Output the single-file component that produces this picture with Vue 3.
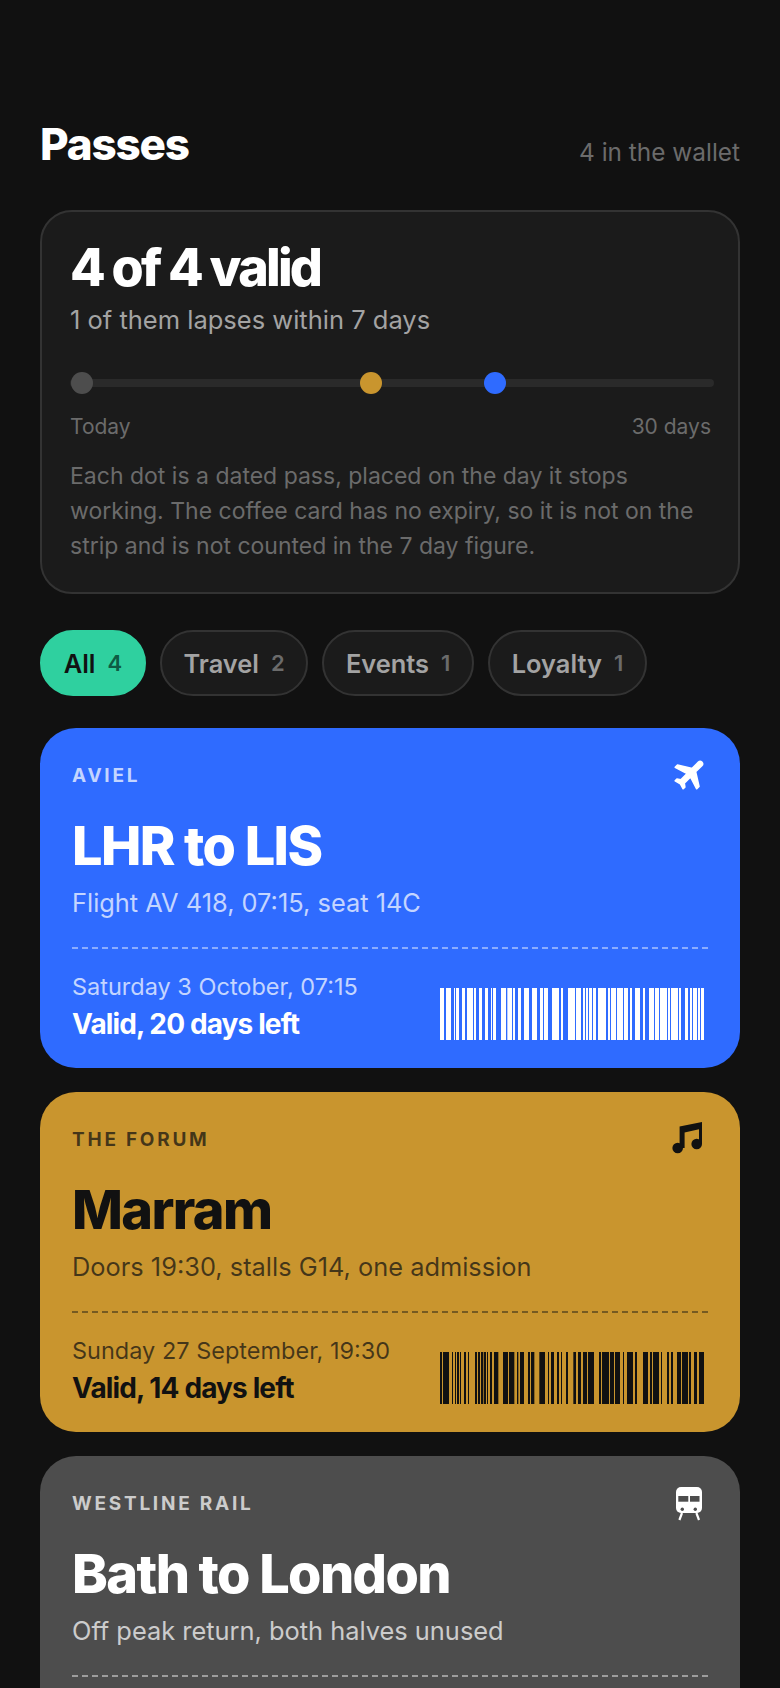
<template>
  <div class="wallet">
    <header class="top">
      <h1>Passes</h1>
      <span class="top-count">4 in the wallet</span>
    </header>

    <section class="summary">
      <h2>4 of 4 valid</h2>
      <p class="summary-sub">1 of them lapses within 7 days</p>
      <div class="strip">
        <span v-for="d in dots" :key="d.left" class="dot" :class="d.cls" :style="{ left: d.left + 'px' }"></span>
      </div>
      <div class="strip-ends">
        <span>Today</span>
        <span>30 days</span>
      </div>
      <p class="summary-note">
        Each dot is a dated pass, placed on the day it stops working. The coffee card has no expiry, so it is not on
        the strip and is not counted in the 7 day figure.
      </p>
    </section>

    <nav class="filters">
      <button v-for="(f, i) in filters" :key="f.name" class="chip" :class="{ active: i === 0 }">
        {{ f.name }}<span class="chip-num">{{ f.count }}</span>
      </button>
    </nav>

    <article v-for="p in passes" :key="p.title" class="pass" :class="p.cls">
      <div class="pass-head">
        <span class="issuer">{{ p.issuer }}</span>
        <svg v-if="p.icon === 'plane'" class="icon" viewBox="0 0 36 36" aria-hidden="true">
          <g transform="translate(18.5 15.5) rotate(45) scale(1.6) translate(-11.5 -12)">
            <path
              d="M21 16v-2l-8-5V3.5c0-.83-.67-1.5-1.5-1.5S10 2.67 10 3.5V9l-8 5v2l8-2.5V19l-2 1.5V22l3.5-1 3.5 1v-1.5L13 19v-5.5l8 2.5z"
              fill="currentColor" stroke="currentColor" stroke-width="1" stroke-linejoin="round"
            />
          </g>
        </svg>
        <svg v-else-if="p.icon === 'music'" class="icon" viewBox="0 0 36 36" aria-hidden="true">
          <circle cx="5.7" cy="26" r="5.3" fill="currentColor" />
          <circle cx="24.7" cy="22" r="5.3" fill="currentColor" />
          <path d="M7.6 26V4.6L30 0v22h-3V7.3l-14.4 3.2V26z" fill="currentColor" />
        </svg>
        <svg v-else class="icon" viewBox="0 0 36 36" aria-hidden="true">
          <rect x="4" y="1" width="26" height="26" rx="5" fill="currentColor" />
          <rect x="6.3" y="10" width="10" height="5.7" fill="#4d4d4d" />
          <rect x="18" y="10" width="9.5" height="5.7" fill="#4d4d4d" />
          <circle cx="10.3" cy="23.3" r="1.7" fill="#4d4d4d" />
          <circle cx="23.3" cy="23.3" r="1.7" fill="#4d4d4d" />
          <path d="M10 27l-2.6 7M24.4 27l2.6 7" stroke="currentColor" stroke-width="2.2" fill="none" />
        </svg>
      </div>
      <h3>{{ p.title }}</h3>
      <p class="pass-sub">{{ p.sub }}</p>
      <div class="rule"></div>
      <div v-if="p.when" class="pass-foot">
        <div>
          <p class="when">{{ p.when }}</p>
          <p class="status">{{ p.status }}</p>
        </div>
        <svg class="barcode" viewBox="0 0 264 52" preserveAspectRatio="none" aria-hidden="true">
          <rect v-for="b in bars(p.code)" :key="b[0]" :x="b[0]" y="0" :width="b[1]" height="52" fill="currentColor" />
        </svg>
      </div>
    </article>
  </div>
</template>

<script setup>
const dots = [
  { left: 1, cls: 'grey' },
  { left: 290, cls: 'amber' },
  { left: 414, cls: 'blue' }
];

const filters = [
  { name: 'All', count: 4 },
  { name: 'Travel', count: 2 },
  { name: 'Events', count: 1 },
  { name: 'Loyalty', count: 1 }
];

// bar start,end pairs read off the picture, in 3x pixels from x=420
const blueCode = [
  60, 72, 78, 93, 102, 105, 108, 117, 126, 135, 141, 159, 162, 168, 177, 186, 195, 204, 213, 216, 219, 228, 243, 258,
  262, 276, 279, 285, 294, 303, 312, 327, 336, 351, 360, 369, 372, 384, 396, 417, 423, 429, 444, 465, 468, 483, 489,
  495, 498, 504, 507, 516, 519, 528, 534, 558, 564, 570, 573, 588, 591, 609, 612, 624, 630, 636, 645, 660, 669, 675,
  687, 702, 705, 717, 720, 741, 744, 750, 753, 774, 777, 783, 795, 804, 810, 816, 819, 831, 834, 840, 843, 852
];
const amberCode = [
  60, 66, 69, 87, 96, 99, 105, 108, 111, 117, 120, 123, 132, 138, 144, 147, 165, 171, 174, 180, 183, 190, 192, 198,
  201, 204, 210, 216, 222, 235, 249, 264, 267, 283, 291, 295, 300, 312, 324, 330, 333, 343, 358, 375, 384, 387, 393,
  402, 411, 417, 423, 426, 438, 444, 460, 468, 474, 483, 489, 501, 504, 522, 537, 543, 546, 567, 570, 582, 585, 600,
  609, 612, 621, 639, 645, 651, 669, 684, 690, 696, 699, 717, 723, 726, 741, 747, 753, 759, 771, 783, 786, 804, 807,
  813, 822, 831, 837, 852
];

const bars = (code) => {
  const out = [];
  for (let i = 0; i < code.length; i += 2) {
    out.push([(code[i] - 60) / 3, (code[i + 1] - code[i]) / 3]);
  }
  return out;
};

const passes = [
  {
    cls: 'blue',
    icon: 'plane',
    issuer: 'AVIEL',
    title: 'LHR to LIS',
    sub: 'Flight AV 418, 07:15, seat 14C',
    when: 'Saturday 3 October, 07:15',
    status: 'Valid, 20 days left',
    code: blueCode
  },
  {
    cls: 'amber',
    icon: 'music',
    issuer: 'THE FORUM',
    title: 'Marram',
    sub: 'Doors 19:30, stalls G14, one admission',
    when: 'Sunday 27 September, 19:30',
    status: 'Valid, 14 days left',
    code: amberCode
  },
  {
    cls: 'grey',
    icon: 'train',
    issuer: 'WESTLINE RAIL',
    title: 'Bath to London',
    sub: 'Off peak return, both halves unused'
  }
];
</script>

<style>
html,
body {
  background: #111111;
}
</style>

<style scoped>
.wallet {
  box-sizing: border-box;
  height: 1688px;
  overflow: hidden;
  padding: 114px 40px 0;
  background: #111111;
  color: #ffffff;
  font-family: Inter, "Liberation Sans", sans-serif;
}
.top {
  display: flex;
  justify-content: space-between;
  align-items: flex-end;
  height: 60px;
  margin-bottom: 36px;
}
.top h1 {
  margin: 0;
  font-size: 44px;
  line-height: 60px;
  font-weight: 800;
  letter-spacing: -1.2px;
}
.top-count {
  font-size: 24.4px;
  line-height: 30px;
  margin-bottom: 7px;
  color: #6b6b6b;
}
.summary {
  box-sizing: border-box;
  height: 384px;
  padding: 26px 24px 26px 28px;
  background: #1b1b1b;
  border: 2px solid #333333;
  border-radius: 32px;
}
.summary h2 {
  margin: 0;
  font-size: 52px;
  line-height: 60px;
  font-weight: 800;
  letter-spacing: -2.8px;
}
.summary-sub {
  margin: 6px 0 0;
  font-size: 25.5px;
  line-height: 32px;
  color: #a3a3a3;
}
.strip {
  position: relative;
  height: 8px;
  margin-top: 43px;
  background: #2a2a2a;
  border-radius: 4px;
}
.dot {
  position: absolute;
  top: -7px;
  width: 22px;
  height: 22px;
  border-radius: 50%;
}
.dot.grey { background: #4d4d4d; }
.dot.amber { background: #c9952e; }
.dot.blue { background: #2f6bff; }
.strip-ends {
  display: flex;
  justify-content: space-between;
  margin-top: 26px;
  padding-right: 3px;
  font-size: 21px;
  line-height: 28px;
  color: #6b6b6b;
}
.summary-note {
  margin: 18px 0 0;
  font-size: 23px;
  line-height: 35px;
  color: #6b6b6b;
}
.filters {
  display: flex;
  gap: 14px;
  margin-top: 36px;
}
.chip {
  display: flex;
  align-items: center;
  gap: 12px;
  box-sizing: border-box;
  height: 66px;
  padding: 0 21.7px;
  background: #1b1b1b;
  border: 2px solid #333333;
  border-radius: 33px;
  color: #a3a3a3;
  font-family: inherit;
  font-size: 25.4px;
  font-weight: 600;
}
.chip-num {
  font-size: 22px;
  color: #6b6b6b;
}
.chip.active {
  background: #2fd09f;
  border-color: #2fd09f;
  color: #111111;
}
.chip.active .chip-num {
  color: #0e5b44;
}
.pass {
  box-sizing: border-box;
  min-height: 340px;
  margin-top: 24px;
  padding: 30px 32px 26px;
  border-radius: 36px;
}
.filters + .pass {
  margin-top: 32px;
}
.pass.blue {
  background: #2f6bff;
  color: #ffffff;
  --soft: rgba(255, 255, 255, 0.72);
  --line: rgba(255, 255, 255, 0.45);
}
.pass.amber {
  background: #c9952e;
  color: #111111;
  --soft: rgba(17, 17, 17, 0.72);
  --line: rgba(17, 17, 17, 0.45);
}
.pass.grey {
  background: #4d4d4d;
  color: #ffffff;
  --soft: rgba(255, 255, 255, 0.72);
  --line: rgba(255, 255, 255, 0.45);
}
.pass-head {
  display: flex;
  justify-content: space-between;
  height: 36px;
}
.issuer {
  margin-top: 4px;
  font-size: 19px;
  line-height: 28px;
  font-weight: 700;
  letter-spacing: 2.75px;
  color: var(--soft);
}
.icon {
  width: 36px;
  height: 36px;
}
.pass h3 {
  margin: 20px 0 0;
  font-size: 54px;
  line-height: 64px;
  font-weight: 800;
  letter-spacing: -1.6px;
}
.pass-sub {
  margin: 9px 0 0;
  font-size: 25.4px;
  line-height: 32px;
  color: var(--soft);
}
.rule {
  margin-top: 28px;
  border-top: 2px dashed var(--line);
}
.pass-foot {
  display: flex;
  justify-content: space-between;
  align-items: flex-end;
  margin-top: 23px;
  padding-right: 4px;
}
.when {
  margin: 0;
  font-size: 23.5px;
  line-height: 30px;
  color: var(--soft);
}
.status {
  margin: 5px 0 0;
  font-size: 28px;
  line-height: 34px;
  font-weight: 700;
  letter-spacing: -0.87px;
}
.barcode {
  width: 264px;
  height: 52px;
  margin-bottom: 1px;
}
</style>
